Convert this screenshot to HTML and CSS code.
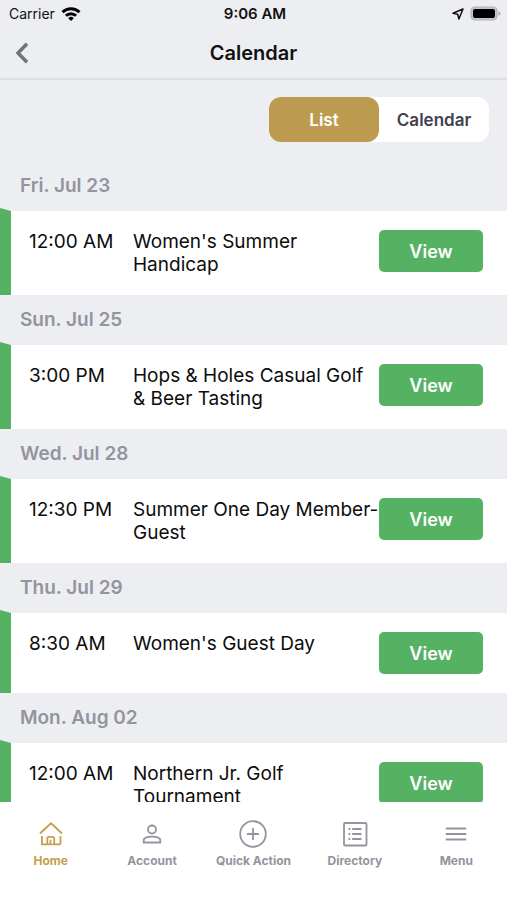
FILE: index.html
```html
<!DOCTYPE html>
<html lang="en">
<head>
<meta charset="utf-8">
<meta name="viewport" content="width=device-width, initial-scale=1">
<title>Calendar</title>
<link rel="stylesheet" href="styles.css">
</head>
<body>
<header class="top">
  <div class="status">
    <div class="carrier">
      <span>Carrier</span>
      <svg width="20" height="16" viewBox="0 0 20 16" fill="none" stroke="#000" stroke-width="3" aria-hidden="true">
        <path d="M1.500 6.200a12.200 12.200 0 0 1 17 0"/>
        <path d="M4.900 9.800a7.300 7.300 0 0 1 10.200 0"/>
        <path d="M10 15l-2.800-2.800a4 4 0 0 1 5.600 0z" fill="#000" stroke="none"/>
      </svg>
    </div>
    <time class="clock">9:06 AM</time>
    <div class="indicators">
      <svg width="12" height="12" viewBox="0 0 12 12" fill="none" stroke="#111" stroke-width="1.500" stroke-linejoin="round" aria-hidden="true">
        <path d="M11 1L1 5.200l4.700 1.100L6.900 11z"/>
      </svg>
      <svg width="31" height="15" viewBox="0 0 31 15" aria-hidden="true">
        <rect x="1" y="1" width="26" height="13" rx="4" fill="#c6c7ca" stroke="#b2b3b6" stroke-width="1.200"/>
        <rect x="3" y="3" width="22" height="9" rx="2" fill="#000"/>
        <path d="M28.500 5.200q2 .8 2 2.300t-2 2.300z" fill="#a5a6a9"/>
      </svg>
    </div>
  </div>
  <div class="navbar">
    <button class="back" type="button" aria-label="Back">
      <svg width="14" height="22" viewBox="0 0 14 22" fill="none" stroke="#727376" stroke-width="3.500" aria-hidden="true">
        <path d="M12 1.800L3 11l9 9.200"/>
      </svg>
    </button>
    <h1>Calendar</h1>
  </div>
</header>

<main class="content">
  <div class="toolbar">
    <div class="switch">
      <button class="switch-option selected" type="button" aria-pressed="true">List</button>
      <button class="switch-option" type="button" aria-pressed="false">Calendar</button>
    </div>
  </div>

  <section>
    <h2>Fri. Jul 23</h2>
    <article class="event">
      <time>12:00 AM</time>
      <h3>Women's Summer Handicap</h3>
      <button class="view" type="button">View</button>
    </article>
  </section>
  <section>
    <h2>Sun. Jul 25</h2>
    <article class="event">
      <time>3:00 PM</time>
      <h3>Hops &amp; Holes Casual Golf &amp; Beer Tasting</h3>
      <button class="view" type="button">View</button>
    </article>
  </section>
  <section>
    <h2>Wed. Jul 28</h2>
    <article class="event">
      <time>12:30 PM</time>
      <h3>Summer One Day Member-Guest</h3>
      <button class="view" type="button">View</button>
    </article>
  </section>
  <section>
    <h2>Thu. Jul 29</h2>
    <article class="event">
      <time>8:30 AM</time>
      <h3>Women's Guest Day</h3>
      <button class="view" type="button">View</button>
    </article>
  </section>
  <section>
    <h2>Mon. Aug 02</h2>
    <article class="event">
      <time>12:00 AM</time>
      <h3>Northern Jr. Golf Tournament</h3>
      <button class="view" type="button">View</button>
    </article>
  </section>
</main>

<nav class="tabs">
  <a class="tab current" href="#home" aria-current="page">
    <svg viewBox="0 0 28 28" aria-hidden="true">
      <path d="M3 13.500L14 3.300l11 10.200"/>
      <path d="M5 16v8.300h5.300v-5.800q0-1.700 1.700-1.700h3.500q1.700 0 1.700 1.700v5.800h5.300q1 0 1-1V16M10.300 24.300h3.200v-4.500M17.200 24.300h-2.500"/>
    </svg>
    <span>Home</span>
  </a>
  <a class="tab" href="#account">
    <svg viewBox="0 0 28 28" aria-hidden="true">
      <circle cx="14" cy="9.500" r="4"/>
      <path d="M5.700 22.500v-2.200c0-2.600 4.500-3.600 8.300-3.600s8.300 1 8.300 3.600v2.200z"/>
    </svg>
    <span>Account</span>
  </a>
  <a class="tab" href="#quick-action">
    <svg viewBox="0 0 28 28" aria-hidden="true">
      <circle cx="14" cy="14" r="12.800"/>
      <path d="M14 8v12M8 14h12"/>
    </svg>
    <span>Quick Action</span>
  </a>
  <a class="tab" href="#directory">
    <svg viewBox="0 0 28 28" aria-hidden="true">
      <rect x="3" y="3" width="22.500" height="22.500" rx="1"/>
      <path d="M11.200 9h9.300M11.200 14h9.300M11.200 19h9.300M7.500 9h1.800M7.500 14h1.800M7.500 19h1.800"/>
    </svg>
    <span>Directory</span>
  </a>
  <a class="tab" href="#menu">
    <svg viewBox="0 0 28 28" aria-hidden="true">
      <path d="M4.500 8.500h19M4.500 14h19M4.500 19.500h19" stroke-linecap="round"/>
    </svg>
    <span>Menu</span>
  </a>
</nav>
</body>
</html>
```
FILE: styles.css
```css
* {
  box-sizing: border-box;
}

body {
  margin: 0;
  height: 100vh;
  display: flex;
  flex-direction: column;
  background: #fff;
  color: #111;
  font-family: Inter, "Liberation Sans", sans-serif;
}

button {
  border: 0;
  padding: 0;
  font: inherit;
  cursor: pointer;
}

h1,
h2,
h3 {
  margin: 0;
}

svg {
  display: block;
}

.top {
  flex: none;
  background: #edeef2;
  border-bottom: 2px solid #dddee1;
}

.status {
  display: grid;
  grid-template-columns: 1fr auto 1fr;
  align-items: center;
  height: 27px;
  padding: 0 6px 0 9px;
  font-size: 14px;
}

.carrier,
.indicators {
  display: flex;
  align-items: center;
  gap: 6px;
}

.indicators {
  justify-content: flex-end;
}

.clock {
  font-size: 15px;
  font-weight: 600;
}

.navbar {
  display: grid;
  grid-template-columns: 44px 1fr 44px;
  align-items: center;
  height: 51px;
}

.back {
  display: flex;
  align-items: center;
  height: 44px;
  padding-left: 15px;
  background: none;
}

h1 {
  font-size: 20px;
  line-height: 24px;
  font-weight: 600;
  text-align: center;
}

.content {
  flex: 1;
  min-height: 0;
  overflow: hidden;
  background: #edeef2;
}

.toolbar {
  display: flex;
  justify-content: flex-end;
  padding: 17px 18px 19px;
}

.switch {
  display: flex;
  border-radius: 12px;
  background: #fff;
}

.switch-option {
  width: 110px;
  height: 45px;
  border-radius: 12px;
  background: none;
  color: #41424d;
  font-size: 17px;
  font-weight: 600;
}

.switch-option.selected {
  background: #bc9b50;
  color: #fff;
}

h2 {
  padding: 13px 20px;
  color: #93949d;
  font-size: 19px;
  line-height: 24px;
  font-weight: 600;
}

.event {
  position: relative;
  display: grid;
  grid-template-columns: 104px 1fr 104px;
  align-items: start;
  padding: 19px 24px 19px 29px;
  background: #fff;
  color: #0c0c0c;
  font-size: 19px;
  line-height: 23px;
}

.event::before {
  content: "";
  position: absolute;
  top: -3px;
  bottom: 0;
  left: 0;
  width: 11px;
  background: #56b263;
  clip-path: polygon(0 0, 100% 3px, 100% 100%, 0 100%);
}

h3 {
  margin-right: -1px;
  font-size: 19px;
  font-weight: 400;
}

.view {
  height: 42px;
  border-radius: 5px;
  background: #56b263;
  color: #fff;
  font-size: 18px;
  font-weight: 600;
}

.tabs {
  flex: none;
  display: grid;
  grid-template-columns: repeat(5, 1fr);
  padding: 18px 0 31px;
  background: #fff;
}

.tab {
  display: flex;
  flex-direction: column;
  align-items: center;
  gap: 5px;
  color: #93949d;
  font-size: 12px;
  line-height: 16px;
  font-weight: 700;
  text-decoration: none;
  white-space: nowrap;
}

.tab svg {
  width: 28px;
  height: 28px;
  fill: none;
  stroke: currentColor;
  stroke-width: 1.800;
}

.tab.current {
  color: #c39f4c;
}
```
